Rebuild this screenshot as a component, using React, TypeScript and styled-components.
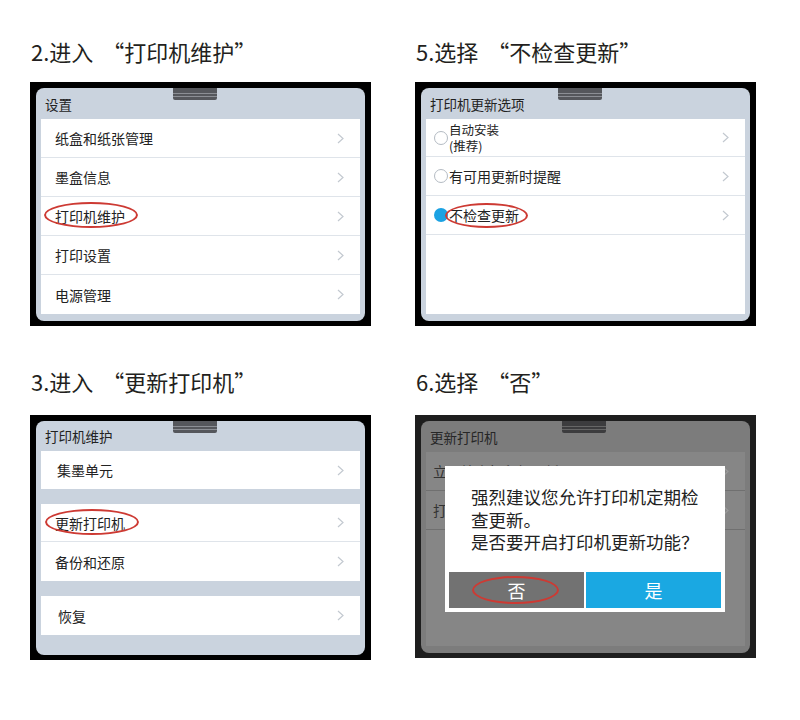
import React from 'react';
import styled, { createGlobalStyle } from 'styled-components';

const Global = createGlobalStyle`
  html, body { margin: 0; padding: 0; background: #fff; }
  body {
    font-family: "Noto Sans CJK SC", "Noto Sans", sans-serif;
    width: 800px;
    height: 720px;
    overflow: hidden;
  }
`;

const Page = styled.div`
  display: grid;
  grid-template-columns: 341px 341px;
  column-gap: 44px;
  row-gap: 40px;
  padding: 36px 0 0 30px;
`;

const Step = styled.section`
  display: flex;
  flex-direction: column;
`;

const Title = styled.h2<{ $gap: number }>`
  margin: 0 0 ${p => p.$gap}px 1px;
  font-size: 22px;
  line-height: 30px;
  font-weight: 400;
  color: #231f20;
`;

const OpenQuote = styled.span`
  margin-left: 9px;
`;

const Frame = styled.div<{ $h: number; $dark?: boolean }>`
  height: ${p => p.$h}px;
  box-sizing: border-box;
  background: ${p => (p.$dark ? '#1e1e1e' : '#000')};
  padding: 6px 6px 5px 6px;
  display: flex;
`;

const Screen = styled.div<{ $dim?: boolean }>`
  flex: 1;
  position: relative;
  display: flex;
  flex-direction: column;
  border-radius: 8px;
  overflow: hidden;
  background: ${p => (p.$dim ? '#7c7c7c' : '#cad3de')};
`;

const Notch = styled.div<{ $dim?: boolean; $left: number }>`
  position: absolute;
  top: 0;
  left: ${p => p.$left}px;
  width: 44px;
  height: 12px;
  border-radius: 0 0 2px 2px;
  background: ${p =>
    p.$dim
      ? 'linear-gradient(#3c3c3e 0 5px, #666 5px 6px, #3c3c3e 6px 8px, #666 8px 9px, #3c3c3e 9px)'
      : 'linear-gradient(#55575c 0 5px, #8c8f95 5px 6px, #55575c 6px 8px, #8c8f95 8px 9px, #55575c 9px)'};
`;

const Header = styled.div<{ $h?: number; $dim?: boolean }>`
  height: ${p => p.$h ?? 31}px;
  flex: none;
  display: flex;
  align-items: center;
  padding-left: 9px;
  font-size: 13.5px;
  color: ${p => (p.$dim ? '#262626' : '#222')};
`;

const List = styled.div<{ $fill?: boolean; $dim?: boolean }>`
  margin: 0 5px;
  background: ${p => (p.$dim ? '#868686' : '#fff')};
  display: flex;
  flex-direction: column;
  ${p => (p.$fill ? 'flex: 1; margin-bottom: 7px;' : '')}
`;

const Groups = styled.div`
  display: flex;
  flex-direction: column;
  gap: 15px;
`;

const Row = styled.div<{ $indent?: number; $h?: number; $dim?: boolean; $last?: boolean }>`
  height: ${p => p.$h ?? 39}px;
  box-sizing: border-box;
  border-bottom: ${p => (p.$last ? 'none' : `1px solid ${p.$dim ? '#707070' : '#dfe4ea'}`)};
  display: flex;
  align-items: center;
  padding: 0 16px 0 ${p => p.$indent ?? 14}px;
  font-size: 14px;
  color: ${p => (p.$dim ? '#333' : '#222')};
`;

const Label = styled.span`
  flex: 1;
  line-height: 20px;
  white-space: nowrap;
`;

const SmallLabel = styled.span`
  flex: 1;
  font-size: 12.5px;
  line-height: 16px;
`;

const Mark = styled.span<{ $t: number; $r: number; $b: number; $l: number }>`
  position: relative;
  display: inline-block;
  &::after {
    content: '';
    position: absolute;
    top: ${p => p.$t}px;
    right: ${p => p.$r}px;
    bottom: ${p => p.$b}px;
    left: ${p => p.$l}px;
    border: 2px solid #cd3a33;
    border-radius: 50%;
  }
`;

const Radio = styled.span<{ $on?: boolean }>`
  flex: none;
  width: 14px;
  height: 14px;
  box-sizing: border-box;
  border-radius: 50%;
  margin-right: 1px;
  border: ${p => (p.$on ? 'none' : '1.5px solid #b4bbc3')};
  background: ${p => (p.$on ? '#1ba2e3' : '#fff')};
`;

const Dialog = styled.div`
  position: absolute;
  left: 24px;
  top: 45px;
  width: 280px;
  height: 146px;
  background: #fff;
  display: flex;
  flex-direction: column;
`;

const DialogText = styled.p`
  margin: 0;
  padding: 20px 18px 0 26px;
  font-size: 17.5px;
  line-height: 22.5px;
  color: #222;
`;

const Buttons = styled.div`
  margin-top: auto;
  padding: 0 4px 4px;
  display: grid;
  grid-template-columns: 1fr 1fr;
  gap: 2px;
`;

const Btn = styled.div<{ $primary?: boolean }>`
  height: 36px;
  display: flex;
  align-items: center;
  justify-content: center;
  background: ${p => (p.$primary ? '#1aa8e2' : '#727272')};
  color: #fff;
  font-size: 18px;
  line-height: 22px;
`;

const Chevron = ({ dim }: { dim?: boolean }) => (
  <svg width="7" height="11" viewBox="0 0 7 11" style={{ flex: 'none' }}>
    <polyline
      points="1,1 6,5.5 1,10"
      fill="none"
      stroke={dim ? '#9a9a9a' : '#c3c9d0'}
      strokeWidth="1.2"
    />
  </svg>
);

export default function App() {
  return (
    <>
      <Global />
      <Page>
        <Step>
          <Title $gap={16}>2.进入<OpenQuote>“</OpenQuote>打印机维护”</Title>
          <Frame $h={244}>
            <Screen>
              <Notch $left={137} />
              <Header>设置</Header>
              <List>
                <Row><Label>纸盒和纸张管理</Label><Chevron /></Row>
                <Row><Label>墨盒信息</Label><Chevron /></Row>
                <Row>
                  <Label>
                    <Mark $t={-4.5} $r={-13} $b={-1.5} $l={-11}>打印机维护</Mark>
                  </Label>
                  <Chevron />
                </Row>
                <Row><Label>打印设置</Label><Chevron /></Row>
                <Row $last><Label>电源管理</Label><Chevron /></Row>
              </List>
            </Screen>
          </Frame>
        </Step>

        <Step>
          <Title $gap={16}>5.选择<OpenQuote>“</OpenQuote>不检查更新”</Title>
          <Frame $h={244}>
            <Screen>
              <Notch $left={137} />
              <Header>打印机更新选项</Header>
              <List $fill>
                <Row $indent={8} $h={38}>
                  <Radio />
                  <SmallLabel>自动安装<br />(推荐)</SmallLabel>
                  <Chevron />
                </Row>
                <Row $indent={8}>
                  <Radio />
                  <Label>有可用更新时提醒</Label>
                  <Chevron />
                </Row>
                <Row $indent={8}>
                  <Radio $on />
                  <Label>
                    <Mark $t={-2.5} $r={-9} $b={-2.5} $l={-4}>不检查更新</Mark>
                  </Label>
                  <Chevron />
                </Row>
              </List>
            </Screen>
          </Frame>
        </Step>

        <Step>
          <Title $gap={19}>3.进入<OpenQuote>“</OpenQuote>更新打印机”</Title>
          <Frame $h={245}>
            <Screen>
              <Notch $left={137} />
              <Header $h={30}>打印机维护</Header>
              <Groups>
                <List>
                  <Row $indent={16} $h={38} $last><Label>集墨单元</Label><Chevron /></Row>
                </List>
                <List>
                  <Row $h={38}>
                    <Label>
                      <Mark $t={-4} $r={-14} $b={-2} $l={-10}>更新打印机</Mark>
                    </Label>
                    <Chevron />
                  </Row>
                  <Row $h={39} $last><Label>备份和还原</Label><Chevron /></Row>
                </List>
                <List>
                  <Row $indent={17} $h={39} $last><Label>恢复</Label><Chevron /></Row>
                </List>
              </Groups>
            </Screen>
          </Frame>
        </Step>

        <Step>
          <Title $gap={19}>6.选择<OpenQuote>“</OpenQuote>否”</Title>
          <Frame $h={243} $dark>
            <Screen $dim>
              <Notch $dim $left={141} />
              <Header $dim>更新打印机</Header>
              <List $dim $fill>
                <Row $dim $indent={7}><Label>立即检查打印机更新</Label><Chevron dim /></Row>
                <Row $dim $indent={7}><Label>打印机更新选项</Label><Chevron dim /></Row>
              </List>
              <Dialog>
                <DialogText>
                  强烈建议您允许打印机定期检查更新。<br />
                  是否要开启打印机更新功能？
                </DialogText>
                <Buttons>
                  <Btn>
                    <Mark $t={-3} $r={-33} $b={-3} $l={-36}>否</Mark>
                  </Btn>
                  <Btn $primary>是</Btn>
                </Buttons>
              </Dialog>
            </Screen>
          </Frame>
        </Step>
      </Page>
    </>
  );
}
